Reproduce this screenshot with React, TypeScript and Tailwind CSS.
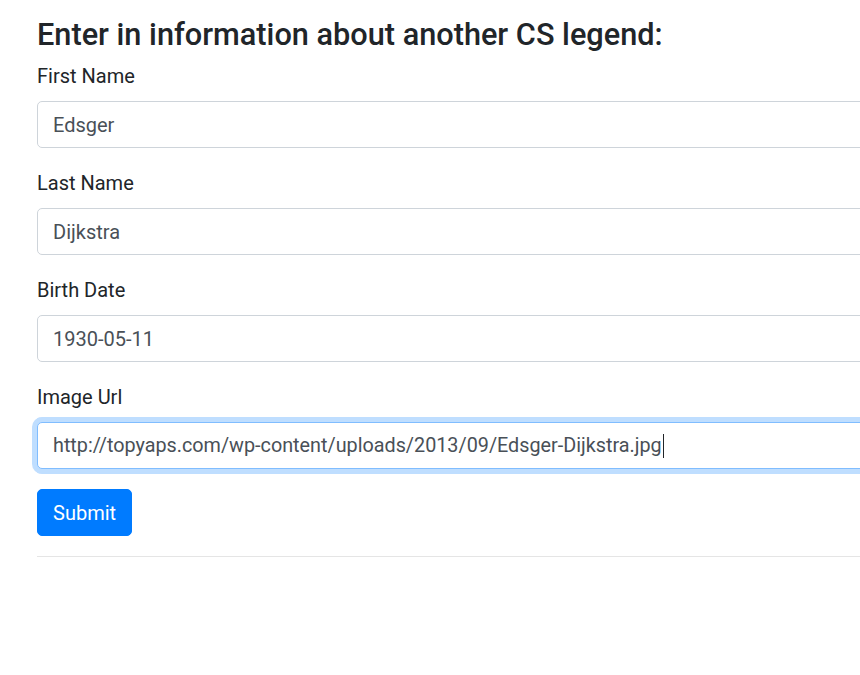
const fields = [
  { label: "First Name", value: "Edsger" },
  { label: "Last Name", value: "Dijkstra" },
  { label: "Birth Date", value: "1930-05-11" },
];

export default function App() {
  return (
    <div className="w-[860px] min-h-[675px] overflow-hidden bg-white font-['Roboto',sans-serif] text-[#212529]">
      <div className="w-[980px] pl-[37px] pt-[17px]">
        <h4 className="mb-[8px] text-[30.7px] leading-[36px] font-medium">
          Enter in information about another CS legend:
        </h4>
        <form onSubmit={(e) => e.preventDefault()}>
          {fields.map((f) => (
            <div key={f.label} className="mb-[20px]">
              <label className="mb-[10px] block pt-px text-[20px] leading-[29px]">{f.label}</label>
              <input
                type="text"
                defaultValue={f.value}
                className="block h-[47px] w-full rounded-[5px] border border-[#ced4da] bg-white px-[15px] pt-px text-[20px] text-[#495057] outline-none"
              />
            </div>
          ))}
          {/* focused field, drawn with its caret */}
          <div className="mb-[20px]">
            <label className="mb-[10px] block pt-px text-[20px] leading-[29px]">Image Url</label>
            <div className="flex h-[47px] w-full items-center rounded-[5px] border border-[#80bdff] bg-white px-[15px] pt-px text-[19.8px] text-[#495057] ring-[5px] ring-[rgba(0,123,255,0.25)]">
              <span>http://topyaps.com/wp-content/uploads/2013/09/Edsger-Dijkstra.jpg</span>
              <span className="ml-px inline-block h-[24px] w-px bg-[#212529]" />
            </div>
          </div>
          <button
            type="submit"
            className="h-[47px] rounded-[5px] border border-[#007bff] bg-[#007bff] px-[15px] pt-px text-[20px] leading-[30px] text-white"
          >
            Submit
          </button>
        </form>
        <hr className="mt-[20px] border-t border-[rgba(0,0,0,0.1)]" />
      </div>
    </div>
  );
}
